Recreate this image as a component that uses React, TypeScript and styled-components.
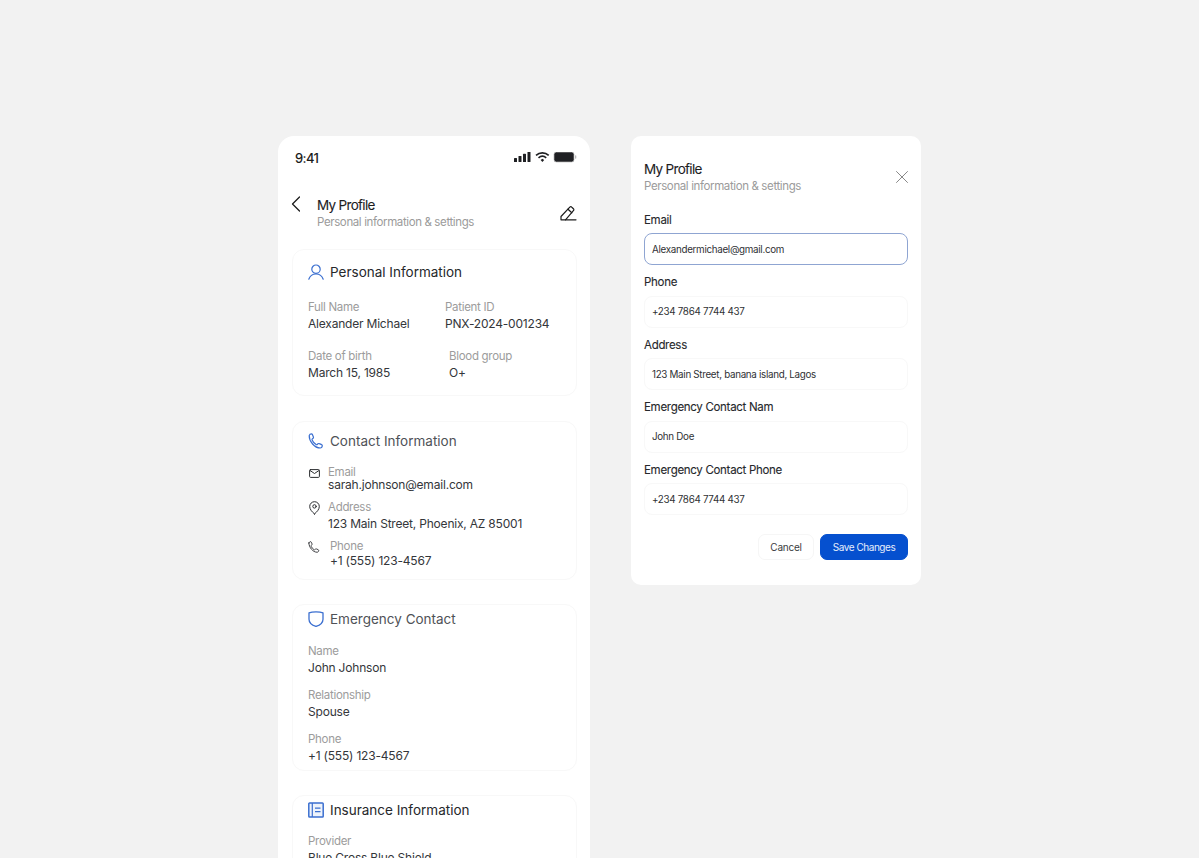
import React from 'react';
import styled, { createGlobalStyle } from 'styled-components';

const GlobalStyle = createGlobalStyle`
  * { box-sizing: border-box; }
  html, body { margin: 0; padding: 0; background: #f2f2f2; }
  body { font-family: "Inter", "Liberation Sans", sans-serif; }
`;

const Page = styled.div`
  display: flex;
  align-items: flex-start;
  gap: 41px;
  height: 858px;
  padding: 136px 0 0 278px;
  overflow: hidden;
`;

const Phone = styled.div`
  width: 312px;
  flex-shrink: 0;
  height: 722px;
  overflow: hidden;
  background: #fff;
  border-radius: 16px 16px 0 0;
  padding: 0 13px 0 14px;
`;

const StatusBar = styled.div`
  display: flex;
  justify-content: space-between;
  align-items: center;
  height: 44px;
  padding: 0 0 0 3px;
`;

const Clock = styled.span`
  font-size: 13px;
  font-weight: 500;
  color: #1c1c1c;
  letter-spacing: -0.6px;
`;

const Header = styled.div`
  display: flex;
  align-items: flex-start;
  margin-top: 15px;
  height: 54px;
`;

const BackButton = styled.div`
  width: 26px;
  margin-left: -1px;
  height: 20px;
  color: #1c1c1c;
`;

const HeaderText = styled.div`
  flex: 1;
  margin-top: 2px;
`;

const Title = styled.div`
  font-size: 13.5px;
  line-height: 17px;
  font-weight: 400;
  color: #1d1d1f;
  letter-spacing: -0.7px;
  -webkit-text-stroke: 0.1px #1d1d1f;
`;

const Subtitle = styled.div`
  font-size: 11.5px;
  line-height: 17px;
  color: #9b9b9b;
  letter-spacing: -0.38px;
`;

const EditButton = styled.div`
  margin-top: 9px;
  color: #1c1c1c;
  height: 18px;
`;

const Card = styled.section<{ $height: number; $gap: number; $pad: number }>`
  height: ${(p) => p.$height}px;
  margin-bottom: ${(p) => p.$gap}px;
  border: 1px solid #f8f8f8;
  border-radius: 12px;
  padding: ${(p) => p.$pad}px 15px 0;
`;

const CardTitle = styled.div<{ $dim?: boolean; $mb: number }>`
  display: flex;
  align-items: center;
  gap: 6px;
  height: 20px;
  font-size: 13.5px;
  font-weight: 400;
  color: ${(p) => (p.$dim ? '#4f5257' : '#26282b')};
  margin-bottom: ${(p) => p.$mb}px;
`;

const IconSlot = styled.span`
  display: flex;
  width: 16px;
  height: 18px;
  align-items: center;
  justify-content: center;
  color: #3b6fd0;
`;

const InfoRow = styled.div<{ $col: number }>`
  display: grid;
  grid-template-columns: ${(p) => p.$col}px 1fr;
  margin-bottom: 17px;
`;

const Item = styled.div`
  margin-bottom: 12px;
`;

const Label = styled.div`
  font-size: 11.5px;
  line-height: 15px;
  color: #9c9c9c;
  letter-spacing: -0.3px;
`;

const Value = styled.div`
  font-size: 12px;
  line-height: 17px;
  color: #34363a;
  letter-spacing: -0.2px;
`;

const ContactRow = styled.div<{ $gap: number; $mb: number; $lh: number }>`
  display: flex;
  gap: ${(p) => p.$gap}px;
  margin-bottom: ${(p) => p.$mb}px;
  ${Value} { line-height: ${(p) => p.$lh}px; }
`;

const ContactIcon = styled.span`
  display: flex;
  width: 12px;
  height: 16px;
  flex-shrink: 0;
  align-items: center;
  justify-content: center;
  color: #2b2d30;
`;

const Modal = styled.div`
  width: 290px;
  flex-shrink: 0;
  height: 449px;
  background: #fff;
  border-radius: 10px;
  padding: 25px 13px 0;
`;

const ModalHeader = styled.div`
  display: flex;
  justify-content: space-between;
  align-items: center;
  margin-bottom: 17.5px;
  height: 34px;
`;

const CloseButton = styled.div`
  display: flex;
  color: #7b7b7b;
  margin: -2px -1px 0 0;
`;

const Field = styled.div`
  margin-bottom: 10px;
  height: 52.5px;
`;

const FieldLabel = styled.div`
  font-size: 11.5px;
  line-height: 14px;
  height: 20.5px;
  color: #26282b;
  letter-spacing: -0.3px;
  -webkit-text-stroke: 0.1px #26282b;
`;

const FieldBox = styled.div<{ $active?: boolean }>`
  height: 32px;
  display: flex;
  align-items: center;
  padding: 0 7px;
  font-size: 9.8px;
  letter-spacing: -0.3px;
  color: #2f3134;
  border-radius: 8px;
  border: 1px solid ${(p) => (p.$active ? '#8fa5d2' : '#f8f8f8')};
`;

const Actions = styled.div`
  display: flex;
  justify-content: flex-end;
  gap: 6px;
  margin-top: 19px;
`;

const Button = styled.button<{ $primary?: boolean }>`
  height: 26px;
  padding: 0;
  width: ${(p) => (p.$primary ? 88 : 56)}px;
  border-radius: 7px;
  font-family: inherit;
  font-size: 10px;
  letter-spacing: ${(p) => (p.$primary ? -0.45 : -0.25)}px;
  color: ${(p) => (p.$primary ? '#e6edfb' : '#3a3c40')};
  background: ${(p) => (p.$primary ? '#0550cf' : '#fff')};
  border: 1px solid ${(p) => (p.$primary ? '#0550cf' : '#f6f6f6')};
`;

const stroke = {
  fill: 'none',
  stroke: 'currentColor',
  strokeLinecap: 'round' as const,
  strokeLinejoin: 'round' as const,
};

const PersonIcon = () => (
  <svg width="16" height="16" viewBox="0 0 16 16" {...stroke} strokeWidth="1.2">
    <circle cx="8" cy="5.2" r="4.2" />
    <path d="M0.8 15.2c1-3 3.6-5.2 7.2-5.2s6.2 2.200 7.200 5.200" />
  </svg>
);

const PhoneGlyph = ({ size, width = 1.2 }: { size: number; width?: number }) => (
  <svg width={size} height={size} viewBox="0 0 16 16" {...stroke} strokeWidth={width}>
    <path d="M1.200 2.600c.3-.9 1.300-1.700 2.200-1.700.5 0 .9.300 1.100.8l.9 2.200c.2.500.1 1-.3 1.300l-.8.700c-.3.300-.4.700-.2 1.100.8 1.800 2.400 3.600 4 4.600.4.200.8.200 1.100-.1l.8-.7c.4-.3.900-.4 1.300-.2l2.300 1c.5.200.7.700.7 1.200-.1 1-1 2.200-2.100 2.200C6.700 15 1 8.500 1.200 2.600z" />
  </svg>
);

const ShieldIcon = () => (
  <svg width="16" height="16" viewBox="0 0 16 16" {...stroke} strokeWidth="1.3">
    <path d="M1 1.800C3 1 5.500.8 8 .8s5 .2 7 1v6.400c0 3.200-3.200 6-7 7.200-3.800-1.200-7-4-7-7.200z" />
  </svg>
);

const NotebookIcon = () => (
  <svg width="16" height="16" viewBox="0 0 16 16" {...stroke} strokeWidth="1.5" strokeLinecap="butt">
    <rect x="0.8" y="1" width="14.400" height="14" rx="0.8" fill="#eef3fb" />
    <path d="M4.300 1v14M7 6.200h5.500M7 9.600h5.500" strokeWidth="1.200" />
  </svg>
);

const MailGlyph = () => (
  <svg width="11" height="9" viewBox="0 0 11 9" {...stroke} strokeWidth="1">
    <rect x="0.6" y="0.6" width="9.800" height="7.800" rx="1" />
    <path d="M1 1.500l4.500 3 4.500-3" />
  </svg>
);

const PinGlyph = () => (
  <svg width="11" height="14" viewBox="0 0 11 14" {...stroke} strokeWidth="1">
    <path d="M5.500 13C3 10.800.7 8.300.7 5.500a4.800 4.800 0 0 1 9.600 0c0 2.800-2.300 5.300-4.800 7.500z" />
    <circle cx="5.500" cy="5.400" r="1.700" />
  </svg>
);

const SignalIcons = () => (
  <svg width="63" height="12" viewBox="0 1 63 12">
    <g fill="#1f2023">
      <rect x="0" y="7" width="3" height="4" rx="0.6" />
      <rect x="4.500" y="5" width="3" height="6" rx="0.6" />
      <rect x="9" y="2.800" width="3" height="8.200" rx="0.6" />
      <rect x="13.500" y="0.500" width="3" height="10.500" rx="0.6" />
    </g>
    <g fill="none" stroke="#1f2023" strokeWidth="1.700">
      <path d="M22 4.300c3.700-3.200 9-3.200 12.700 0" />
      <path d="M24.500 6.900c2.300-2 5.500-2 7.700 0" />
    </g>
    <path d="M26.600 9l1.800-1.300L30.200 9l-1.800 2z" fill="#1f2023" />
    <rect x="40" y="1" width="20" height="10" rx="2.500" fill="#1f2023" stroke="#b9b9b9" strokeWidth="0.700" />
    <rect x="61" y="4.300" width="1.300" height="3.400" rx="0.600" fill="#b9b9b9" />
  </svg>
);

export default function App() {
  return (
    <>
      <GlobalStyle />
      <Page>
        <Phone>
          <StatusBar>
            <Clock>9:41</Clock>
            <SignalIcons />
          </StatusBar>
          <Header>
            <BackButton>
              <svg width="12" height="18" viewBox="0 0 12 18" {...stroke} strokeWidth="1.300">
                <path d="M8.500 2L1.500 9l7 7" />
              </svg>
            </BackButton>
            <HeaderText>
              <Title>My Profile</Title>
              <Subtitle>Personal information &amp; settings</Subtitle>
            </HeaderText>
            <EditButton>
              <svg width="18" height="18" viewBox="0 0 18 18" {...stroke} strokeWidth="1.200">
                <path d="M2 12.500L10.800 3.200c.6-.6 1.400-.6 2 0l1.600 1.500c.6.600.6 1.400 0 2L6.500 15.800H2z" />
                <path d="M9 5.200l3.800 3.600M6.500 15.800h10.500" />
              </svg>
            </EditButton>
          </Header>

          <Card $height={147} $gap={25} $pad={12}>
            <CardTitle $mb={18}>
              <IconSlot><PersonIcon /></IconSlot>
              Personal Information
            </CardTitle>
            <InfoRow $col={137}>
              <div>
                <Label>Full Name</Label>
                <Value>Alexander Michael</Value>
              </div>
              <div>
                <Label>Patient ID</Label>
                <Value>PNX-2024-001234</Value>
              </div>
            </InfoRow>
            <InfoRow $col={141}>
              <div>
                <Label>Date of birth</Label>
                <Value>March 15, 1985</Value>
              </div>
              <div>
                <Label>Blood group</Label>
                <Value>O+</Value>
              </div>
            </InfoRow>
          </Card>

          <Card $height={159} $gap={24} $pad={9}>
            <CardTitle $dim $mb={14}>
              <IconSlot><PhoneGlyph size={16} /></IconSlot>
              Contact Information
            </CardTitle>
            <ContactRow $gap={8} $mb={10} $lh={10}>
              <ContactIcon><MailGlyph /></ContactIcon>
              <div>
                <Label>Email</Label>
                <Value>sarah.johnson@email.com</Value>
              </div>
            </ContactRow>
            <ContactRow $gap={8} $mb={7} $lh={17}>
              <ContactIcon><PinGlyph /></ContactIcon>
              <div>
                <Label>Address</Label>
                <Value>123 Main Street, Phoenix, AZ 85001</Value>
              </div>
            </ContactRow>
            <ContactRow $gap={10} $mb={0} $lh={13}>
              <ContactIcon><PhoneGlyph size={12} /></ContactIcon>
              <div>
                <Label>Phone</Label>
                <Value>+1 (555) 123-4567</Value>
              </div>
            </ContactRow>
          </Card>

          <Card $height={167} $gap={24} $pad={4}>
            <CardTitle $dim $mb={15}>
              <IconSlot><ShieldIcon /></IconSlot>
              Emergency Contact
            </CardTitle>
            <Item>
              <Label>Name</Label>
              <Value>John Johnson</Value>
            </Item>
            <Item>
              <Label>Relationship</Label>
              <Value>Spouse</Value>
            </Item>
            <Item>
              <Label>Phone</Label>
              <Value>+1 (555) 123-4567</Value>
            </Item>
          </Card>

          <Card $height={120} $gap={0} $pad={4}>
            <CardTitle $mb={14}>
              <IconSlot><NotebookIcon /></IconSlot>
              Insurance Information
            </CardTitle>
            <Item>
              <Label>Provider</Label>
              <Value>Blue Cross Blue Shield</Value>
            </Item>
          </Card>
        </Phone>

        <Modal>
          <ModalHeader>
            <div>
              <Title>My Profile</Title>
              <Subtitle>Personal information &amp; settings</Subtitle>
            </div>
            <CloseButton>
              <svg width="14" height="14" viewBox="0 0 14 14" {...stroke} strokeWidth="0.900">
                <path d="M1.500 1.500l11 11M12.500 1.500l-11 11" />
              </svg>
            </CloseButton>
          </ModalHeader>
          <Field>
            <FieldLabel>Email</FieldLabel>
            <FieldBox $active>Alexandermichael@gmail.com</FieldBox>
          </Field>
          <Field>
            <FieldLabel>Phone</FieldLabel>
            <FieldBox>+234 7864 7744 437</FieldBox>
          </Field>
          <Field>
            <FieldLabel>Address</FieldLabel>
            <FieldBox>123 Main Street, banana island, Lagos</FieldBox>
          </Field>
          <Field>
            <FieldLabel>Emergency Contact Nam</FieldLabel>
            <FieldBox>John Doe</FieldBox>
          </Field>
          <Field>
            <FieldLabel>Emergency Contact Phone</FieldLabel>
            <FieldBox>+234 7864 7744 437</FieldBox>
          </Field>
          <Actions>
            <Button>Cancel</Button>
            <Button $primary>Save Changes</Button>
          </Actions>
        </Modal>
      </Page>
    </>
  );
}
